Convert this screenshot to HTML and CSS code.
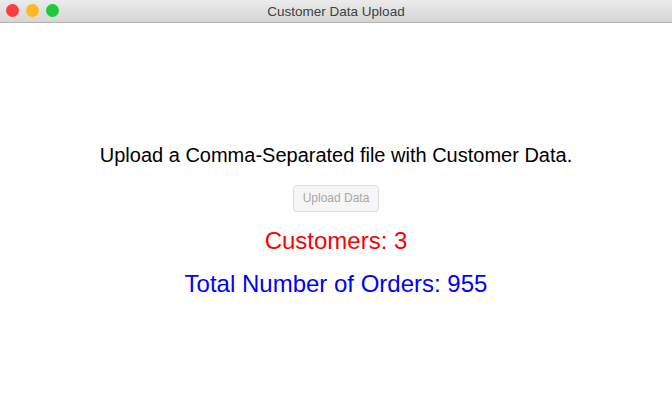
FILE: index.html
```html
<!DOCTYPE html>
<html>
<head>
<meta charset="utf-8">
<link rel="stylesheet" href="styles.css">
</head>
<body>
<div class="window">
  <div class="titlebar">
    <div class="lights">
      <span class="light red"></span>
      <span class="light yellow"></span>
      <span class="light green"></span>
    </div>
    <div class="title">Customer Data Upload</div>
  </div>
  <div class="content">
    <p class="prompt">Upload a Comma-Separated file with Customer Data.</p>
    <button class="upload" disabled>Upload Data</button>
    <p class="customers">Customers: 3</p>
    <p class="orders">Total Number of Orders: 955</p>
  </div>
</div>
</body>
</html>
```
FILE: styles.css
```css
html, body {
  margin: 0;
  padding: 0;
  width: 672px;
  height: 420px;
  overflow: hidden;
  background: #ffffff;
  font-family: "Liberation Sans", Arial, sans-serif;
}
.window {
  display: flex;
  flex-direction: column;
  height: 420px;
}
.titlebar {
  position: relative;
  height: 23px;
  flex: 0 0 23px;
  box-sizing: border-box;
  background: linear-gradient(#ebebeb, #d5d5d5);
  border-bottom: 1px solid #b4b4b4;
  display: flex;
  align-items: center;
  justify-content: center;
}
.lights {
  position: absolute;
  left: 6px;
  top: 4px;
  display: flex;
  gap: 7px;
}
.light {
  width: 13px;
  height: 13px;
  border-radius: 50%;
  display: block;
}
.red { background: #fc3d44; }
.yellow { background: #fdb827; }
.green { background: #1bcb37; }
.title {
  font-size: 13.5px;
  color: #404040;
}
.content {
  flex: 1;
  display: flex;
  flex-direction: column;
  align-items: center;
  justify-content: center;
  padding-bottom: 2px;
}
.content p { margin: 0; }
.prompt {
  font-size: 20px;
  color: #000;
}
.upload {
  margin-top: 18px;
  height: 27px;
  width: 86px;
  font-family: "Liberation Sans", Arial, sans-serif;
  font-size: 12px;
  color: #a8a8a8;
  background: #f6f6f6;
  border: 1px solid #dcdcdc;
  border-radius: 4px;
  padding: 0;
}
.customers {
  margin-top: 15px !important;
  font-size: 24px;
  color: #ff0000;
}
.orders {
  margin-top: 15px !important;
  font-size: 24px;
  color: #0000ff;
}
```
